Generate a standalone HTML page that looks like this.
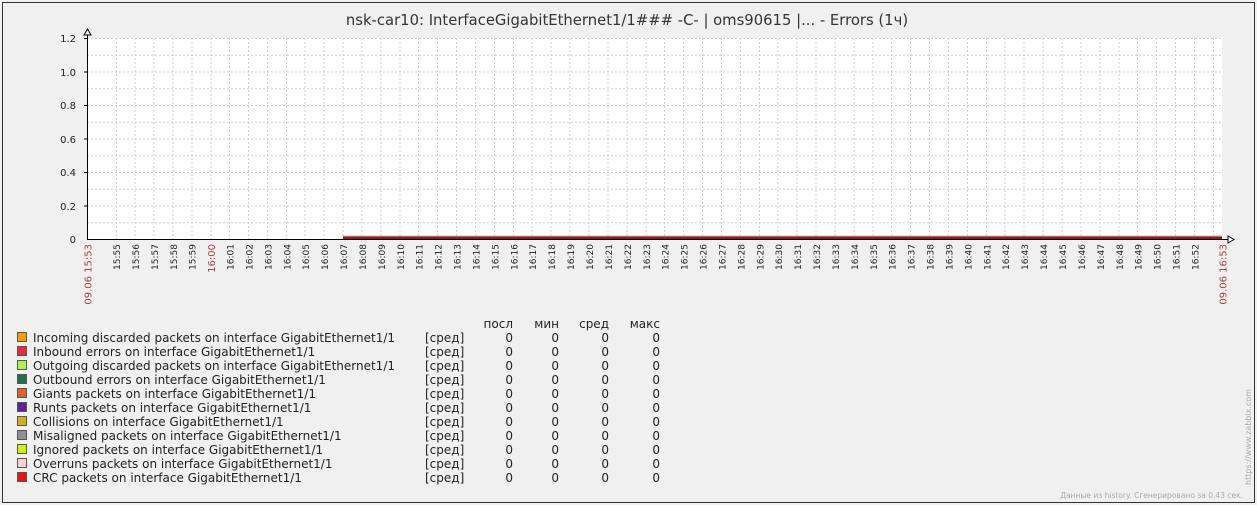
<!DOCTYPE html>
<html><head><meta charset="utf-8"><style>
html,body{margin:0;padding:0;background:#f0f0f0;}
svg{display:block;font-family:"DejaVu Sans","Liberation Sans",sans-serif;}
</style></head><body>
<svg width="1257" height="505" xmlns="http://www.w3.org/2000/svg">
<rect x="0" y="0" width="1257" height="505" fill="#f0f0f0"/>
<rect x="2.5" y="2.5" width="1252" height="500" fill="none" stroke="#333" stroke-width="1"/>
<text x="627" y="25" font-size="14.8" fill="#333" text-anchor="middle">nsk-car10: InterfaceGigabitEthernet1/1### -C- | oms90615 |...  - Errors (1ч)</text>
<rect x="87" y="38" width="1135" height="201" fill="#fff"/>
<g stroke="#cfcfcf" stroke-width="1" stroke-dasharray="2,2" fill="none">
<path d="M87 38.5H1222M87 55.25H1222M87 72H1222M87 88.75H1222M87 105.5H1222M87 122.25H1222M87 139H1222M87 155.75H1222M87 172.5H1222M87 189.25H1222M87 206H1222M87 222.75H1222"/>
<path d="M116.5 38V239M135 38V239M154 38V239M173 38V239M192 38V239M211 38V239M229.5 38V239M248.5 38V239M267.5 38V239M286.5 38V239M305 38V239M324 38V239M343 38V239M362 38V239M381 38V239M400 38V239M418.5 38V239M437.5 38V239M456.5 38V239M475.5 38V239M494.5 38V239M513.5 38V239M532 38V239M551 38V239M570 38V239M589 38V239M608 38V239M627 38V239M646 38V239M664.5 38V239M683.5 38V239M702.5 38V239M721.5 38V239M740.5 38V239M759.5 38V239M778 38V239M797 38V239M816 38V239M835 38V239M854 38V239M873 38V239M891.5 38V239M910.5 38V239M929.5 38V239M948.5 38V239M967.5 38V239M986.5 38V239M1005 38V239M1024 38V239M1043 38V239M1062 38V239M1081 38V239M1100 38V239M1119 38V239M1137.5 38V239M1156.5 38V239M1175.5 38V239M1194.5 38V239M1213.5 38V239"/>
</g>
<rect x="343" y="236.5" width="879" height="2.5" fill="#8b1c1c"/>
<rect x="343" y="235.5" width="879" height="1" fill="#e8b0b0"/>
<g stroke="#000" stroke-width="1" fill="none">
<path d="M87.5 33V239.5H1228"/>
<path d="M84 35L87.5 29L91 35Z" fill="#fff"/>
<path d="M1228 236L1234 239.5L1228 243Z" fill="#fff"/>
<path d="M84 38.5H87M84 72H87M84 105.5H87M84 139H87M84 172.5H87M84 206H87"/>
</g>
<g font-size="10" fill="#222" text-anchor="end">
<text x="76" y="42">1.2</text><text x="76" y="76">1.0</text><text x="76" y="109">0.8</text><text x="76" y="143">0.6</text><text x="76" y="176">0.4</text><text x="76" y="210">0.2</text><text x="76" y="243">0</text>
</g>
<g font-size="9" fill="#222" text-anchor="end">
<text transform="translate(120,244) rotate(-90)">15:55</text>
<text transform="translate(138.9,244) rotate(-90)">15:56</text>
<text transform="translate(157.8,244) rotate(-90)">15:57</text>
<text transform="translate(176.8,244) rotate(-90)">15:58</text>
<text transform="translate(195.7,244) rotate(-90)">15:59</text>
<text transform="translate(215,244) rotate(-90)" fill="#b04040" font-size="10">16:00</text>
<text transform="translate(233.5,244) rotate(-90)">16:01</text>
<text transform="translate(252.4,244) rotate(-90)">16:02</text>
<text transform="translate(271.4,244) rotate(-90)">16:03</text>
<text transform="translate(290.3,244) rotate(-90)">16:04</text>
<text transform="translate(309.2,244) rotate(-90)">16:05</text>
<text transform="translate(328.1,244) rotate(-90)">16:06</text>
<text transform="translate(347,244) rotate(-90)">16:07</text>
<text transform="translate(366,244) rotate(-90)">16:08</text>
<text transform="translate(384.9,244) rotate(-90)">16:09</text>
<text transform="translate(403.8,244) rotate(-90)">16:10</text>
<text transform="translate(422.7,244) rotate(-90)">16:11</text>
<text transform="translate(441.6,244) rotate(-90)">16:12</text>
<text transform="translate(460.6,244) rotate(-90)">16:13</text>
<text transform="translate(479.5,244) rotate(-90)">16:14</text>
<text transform="translate(498.4,244) rotate(-90)">16:15</text>
<text transform="translate(517.3,244) rotate(-90)">16:16</text>
<text transform="translate(536.2,244) rotate(-90)">16:17</text>
<text transform="translate(555.2,244) rotate(-90)">16:18</text>
<text transform="translate(574.1,244) rotate(-90)">16:19</text>
<text transform="translate(593,244) rotate(-90)">16:20</text>
<text transform="translate(611.9,244) rotate(-90)">16:21</text>
<text transform="translate(630.8,244) rotate(-90)">16:22</text>
<text transform="translate(649.8,244) rotate(-90)">16:23</text>
<text transform="translate(668.7,244) rotate(-90)">16:24</text>
<text transform="translate(687.6,244) rotate(-90)">16:25</text>
<text transform="translate(706.5,244) rotate(-90)">16:26</text>
<text transform="translate(725.4,244) rotate(-90)">16:27</text>
<text transform="translate(744.4,244) rotate(-90)">16:28</text>
<text transform="translate(763.3,244) rotate(-90)">16:29</text>
<text transform="translate(782.2,244) rotate(-90)">16:30</text>
<text transform="translate(801.1,244) rotate(-90)">16:31</text>
<text transform="translate(820,244) rotate(-90)">16:32</text>
<text transform="translate(839,244) rotate(-90)">16:33</text>
<text transform="translate(857.9,244) rotate(-90)">16:34</text>
<text transform="translate(876.8,244) rotate(-90)">16:35</text>
<text transform="translate(895.7,244) rotate(-90)">16:36</text>
<text transform="translate(914.6,244) rotate(-90)">16:37</text>
<text transform="translate(933.6,244) rotate(-90)">16:38</text>
<text transform="translate(952.5,244) rotate(-90)">16:39</text>
<text transform="translate(971.4,244) rotate(-90)">16:40</text>
<text transform="translate(990.3,244) rotate(-90)">16:41</text>
<text transform="translate(1009.2,244) rotate(-90)">16:42</text>
<text transform="translate(1028.2,244) rotate(-90)">16:43</text>
<text transform="translate(1047.1,244) rotate(-90)">16:44</text>
<text transform="translate(1066,244) rotate(-90)">16:45</text>
<text transform="translate(1084.9,244) rotate(-90)">16:46</text>
<text transform="translate(1103.8,244) rotate(-90)">16:47</text>
<text transform="translate(1122.8,244) rotate(-90)">16:48</text>
<text transform="translate(1141.7,244) rotate(-90)">16:49</text>
<text transform="translate(1160.6,244) rotate(-90)">16:50</text>
<text transform="translate(1179.5,244) rotate(-90)">16:51</text>
<text transform="translate(1198.4,244) rotate(-90)">16:52</text>
<text transform="translate(91.5,244) rotate(-90)" fill="#b04040" font-size="10">09.06 15:53</text>
<text transform="translate(1226.5,244) rotate(-90)" fill="#b04040" font-size="10">09.06 16:53</text>
</g>
<text transform="translate(1251,485) rotate(-90)" font-size="8" fill="#aaa">https://www.zabbix.com</text>
<text x="1243" y="498" font-size="7.5" fill="#aaa" text-anchor="end">Данные из history. Сгенерировано за 0.43 сек.</text>
<g font-size="12" fill="#222">
<g text-anchor="end"><text x="513" y="328">посл</text><text x="559" y="328">мин</text><text x="609" y="328">сред</text><text x="660" y="328">макс</text></g>
<g stroke="#555" stroke-width="1">
<rect x="17.5" y="332.5" width="9" height="9" fill="#f4a000"/>
<rect x="17.5" y="346.5" width="9" height="9" fill="#e03040"/>
<rect x="17.5" y="360.5" width="9" height="9" fill="#b0f050"/>
<rect x="17.5" y="374.5" width="9" height="9" fill="#207050"/>
<rect x="17.5" y="388.5" width="9" height="9" fill="#e06030"/>
<rect x="17.5" y="402.5" width="9" height="9" fill="#6020a0"/>
<rect x="17.5" y="416.5" width="9" height="9" fill="#d0b020"/>
<rect x="17.5" y="430.5" width="9" height="9" fill="#909090"/>
<rect x="17.5" y="444.5" width="9" height="9" fill="#d0f010"/>
<rect x="17.5" y="458.5" width="9" height="9" fill="#ffd0d0"/>
<rect x="17.5" y="472.5" width="9" height="9" fill="#f01010"/>
</g>
<text x="33" y="342">Incoming discarded packets on interface GigabitEthernet1/1</text>
<text x="33" y="356">Inbound errors on interface GigabitEthernet1/1</text>
<text x="33" y="370">Outgoing discarded packets on interface  GigabitEthernet1/1</text>
<text x="33" y="384">Outbound errors on interface GigabitEthernet1/1</text>
<text x="33" y="398">Giants packets on interface GigabitEthernet1/1</text>
<text x="33" y="412">Runts packets on interface GigabitEthernet1/1</text>
<text x="33" y="426">Collisions on interface GigabitEthernet1/1</text>
<text x="33" y="440">Misaligned packets on interface GigabitEthernet1/1</text>
<text x="33" y="454">Ignored packets on interface GigabitEthernet1/1</text>
<text x="33" y="468">Overruns packets on interface GigabitEthernet1/1</text>
<text x="33" y="482">CRC packets on interface GigabitEthernet1/1</text>
<g><text x="425" y="342">[сред]</text><text x="425" y="356">[сред]</text><text x="425" y="370">[сред]</text><text x="425" y="384">[сред]</text><text x="425" y="398">[сред]</text><text x="425" y="412">[сред]</text><text x="425" y="426">[сред]</text><text x="425" y="440">[сред]</text><text x="425" y="454">[сред]</text><text x="425" y="468">[сред]</text><text x="425" y="482">[сред]</text></g>
<g text-anchor="end">
<text x="513" y="342">0</text><text x="559" y="342">0</text><text x="609" y="342">0</text><text x="660" y="342">0</text>
<text x="513" y="356">0</text><text x="559" y="356">0</text><text x="609" y="356">0</text><text x="660" y="356">0</text>
<text x="513" y="370">0</text><text x="559" y="370">0</text><text x="609" y="370">0</text><text x="660" y="370">0</text>
<text x="513" y="384">0</text><text x="559" y="384">0</text><text x="609" y="384">0</text><text x="660" y="384">0</text>
<text x="513" y="398">0</text><text x="559" y="398">0</text><text x="609" y="398">0</text><text x="660" y="398">0</text>
<text x="513" y="412">0</text><text x="559" y="412">0</text><text x="609" y="412">0</text><text x="660" y="412">0</text>
<text x="513" y="426">0</text><text x="559" y="426">0</text><text x="609" y="426">0</text><text x="660" y="426">0</text>
<text x="513" y="440">0</text><text x="559" y="440">0</text><text x="609" y="440">0</text><text x="660" y="440">0</text>
<text x="513" y="454">0</text><text x="559" y="454">0</text><text x="609" y="454">0</text><text x="660" y="454">0</text>
<text x="513" y="468">0</text><text x="559" y="468">0</text><text x="609" y="468">0</text><text x="660" y="468">0</text>
<text x="513" y="482">0</text><text x="559" y="482">0</text><text x="609" y="482">0</text><text x="660" y="482">0</text>
</g>
</g>
</svg>
</body></html>
